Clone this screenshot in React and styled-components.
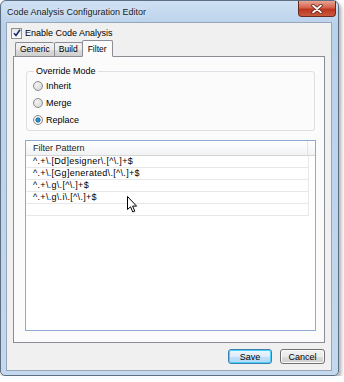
import React, { useState } from 'react';
import styled, { createGlobalStyle } from 'styled-components';

const GlobalStyle = createGlobalStyle`
  body {
    margin: 0;
    background: #ffffff;
    font-family: "Liberation Sans", Arial, sans-serif;
    font-size: 9px;
    color: #000;
  }
`;

const patterns = [
  '^.+\\.[Dd]esigner\\.[^\\.]+$',
  '^.+\\.[Gg]enerated\\.[^\\.]+$',
  '^.+\\.g\\.[^\\.]+$',
  '^.+\\.g\\.i\\.[^\\.]+$',
  '',
];

function App() {
  const [enabled, setEnabled] = useState(true);
  const [mode, setMode] = useState('Replace');
  const [tab, setTab] = useState('Filter');

  return (
    <>
      <GlobalStyle />
      <Window>
        <TitleBar>
          <Title>Code Analysis Configuration Editor</Title>
          <CloseButton aria-label="Close">
            <svg width="12" height="10" viewBox="0 0 12 10">
              <path d="M2 1.5 L10 8.5 M10 1.5 L2 8.5" stroke="#5b1d14" strokeWidth="3.4" strokeLinecap="round" />
              <path d="M2 1.5 L10 8.5 M10 1.5 L2 8.5" stroke="#ffffff" strokeWidth="1.8" strokeLinecap="round" />
            </svg>
          </CloseButton>
        </TitleBar>

        <Client>
          <CheckRow onClick={() => setEnabled(!enabled)}>
            <CheckBox>
              {enabled && (
                <svg width="8" height="8" viewBox="0 0 8 8">
                  <path d="M1 4.2 L3 6.5 L7 0.8" fill="none" stroke="#1c2d6e" strokeWidth="1.6" />
                </svg>
              )}
            </CheckBox>
            Enable Code Analysis
          </CheckRow>

          <TabStrip>
            {['Generic', 'Build', 'Filter'].map((t) => (
              <Tab key={t} $active={tab === t} onClick={() => setTab(t)}>{t}</Tab>
            ))}
          </TabStrip>

          <Panel>
            <GroupBox>
              <Legend>Override Mode</Legend>
              {['Inherit', 'Merge', 'Replace'].map((m) => (
                <RadioRow key={m} onClick={() => setMode(m)}>
                  <Radio $checked={mode === m} />
                  {m}
                </RadioRow>
              ))}
            </GroupBox>

            <ListBox>
              <ListHeader>
                <HeaderCell>Filter Pattern</HeaderCell>
              </ListHeader>
              {patterns.map((p, i) => (
                <ListRow key={i}>
                  <RowCell>{p}</RowCell>
                </ListRow>
              ))}
              <Cursor width="11" height="17" viewBox="0 0 11 17">
                <path d="M0.5 0.5 L0.5 13.5 L3.5 10.8 L5.8 16 L7.8 15.1 L5.6 10.1 L9.6 10.1 Z" fill="#ffffff" stroke="#000000" strokeWidth="1" />
              </Cursor>
            </ListBox>
          </Panel>

          <ButtonRow>
            <Button $default>Save</Button>
            <Button>Cancel</Button>
          </ButtonRow>
        </Client>
      </Window>
    </>
  );
}

const Window = styled.div`
  width: 339px;
  height: 376px;
  border: 1px solid #5d6e82;
  border-radius: 6px 6px 5px 5px;
  background: linear-gradient(180deg, #cfe1f3 0px, #b9d1eb 24px, #c4d8ee 100%);
  box-shadow: 2px 3px 4px rgba(0, 0, 0, 0.35);
  padding: 0 6px 4px 5px;
  box-sizing: border-box;
  display: flex;
  flex-direction: column;
`;

const TitleBar = styled.div`
  height: 21px;
  display: flex;
  align-items: flex-start;
`;

const Title = styled.div`
  padding: 6px 0 0 1px;
  font-size: 9px;
  color: #1a1a1a;
  text-shadow: 0 0 6px #ffffff;
`;

const CloseButton = styled.div`
  margin-left: auto;
  margin-right: -4px;
  width: 38px;
  height: 16px;
  box-sizing: border-box;
  border: 1px solid #6b2a20;
  border-top: none;
  border-radius: 0 0 4px 4px;
  background: linear-gradient(180deg, #e9a595 0%, #d4624b 45%, #bb3520 55%, #cc5a3c 100%);
  display: flex;
  align-items: center;
  justify-content: center;
`;

const Client = styled.div`
  flex: 1;
  background: #f0f0f0;
  border: 1px solid #97a7b9;
  display: flex;
  flex-direction: column;
  padding: 0 6px 0 6px;
`;

const CheckRow = styled.div`
  display: flex;
  align-items: center;
  gap: 3px;
  margin: 4px 0 0 -2px;
  height: 12px;
  cursor: default;
`;

const CheckBox = styled.div`
  width: 9px;
  height: 9px;
  border: 1px solid #8f8f8f;
  background: linear-gradient(180deg, #e6e6e6, #ffffff);
  display: flex;
  align-items: center;
  justify-content: center;
`;

const TabStrip = styled.div`
  display: flex;
  align-items: flex-end;
  height: 17px;
  margin-top: 1px;
  padding-left: 2px;
  position: relative;
  z-index: 1;
`;

const Tab = styled.div`
  height: ${(p) => (p.$active ? '17px' : '14px')};
  padding: ${(p) => (p.$active ? '3px 5px 0 5px' : '1px 4px 0 4px')};
  margin: ${(p) => (p.$active ? '0 -2px 0 -1px' : '0 0 1px 0')};
  box-sizing: border-box;
  font-size: 8.5px;
  border: 1px solid #8a8d94;
  border-bottom: ${(p) => (p.$active ? '1px solid #fbfbfb' : 'none')};
  border-right: ${(p) => (p.$active ? '1px solid #8a8d94' : 'none')};
  background: ${(p) => (p.$active ? '#fbfbfb' : 'linear-gradient(180deg, #f2f2f2 0%, #ebebeb 50%, #dcdcdc 51%, #cfcfcf 100%)')};
  border-radius: 2px 2px 0 0;
  cursor: default;

  &:nth-child(2) {
    border-right: 1px solid #8a8d94;
  }
`;

const Panel = styled.div`
  height: 287px;
  box-sizing: border-box;
  margin-top: -1px;
  border: 1px solid #8a8d94;
  background: #fbfbfb;
  padding: 8px 11px 0 11px;
  display: flex;
  flex-direction: column;
`;

const GroupBox = styled.fieldset`
  margin: 0 0 0 1px;
  width: 289px;
  box-sizing: border-box;
  height: 66px;
  padding: 0 0 0 6px;
  border: 1px solid #dcdfe4;
  border-radius: 3px;
`;

const Legend = styled.legend`
  padding: 0 2px;
  margin-left: 1px;
  line-height: 12px;
  font-size: 9px;
`;

const RadioRow = styled.div`
  display: flex;
  align-items: center;
  gap: 3px;
  height: 17px;
  cursor: default;
`;

const Radio = styled.div`
  width: 10px;
  height: 10px;
  box-sizing: border-box;
  border-radius: 50%;
  border: 1px solid #8c8c8c;
  background: ${(p) =>
    p.$checked
      ? 'radial-gradient(circle, #3ea6d8 0, #1c6ea8 2.2px, #e8e8e8 2.8px, #f7f7f7 100%)'
      : 'radial-gradient(circle at 35% 35%, #f4f4f4 0, #dcdcdc 70%, #c9c9c9 100%)'};
`;

const ListBox = styled.div`
  position: relative;
  margin-top: 9px;
  width: 291px;
  height: 191px;
  box-sizing: border-box;
  border: 1px solid #8faad0;
  background: #ffffff;
`;

const ListHeader = styled.div`
  height: 15px;
  box-sizing: border-box;
  border-bottom: 1px solid #d5d5d5;
  background: linear-gradient(180deg, #ffffff 0%, #f7f8fa 60%, #f1f2f4 100%);
  display: flex;
`;

const HeaderCell = styled.div`
  width: 282px;
  box-sizing: border-box;
  padding: 2px 0 0 7px;
  border-right: 1px solid #e3e4e6;
  color: #1e1e1e;
`;

const ListRow = styled.div`
  height: 12px;
  box-sizing: border-box;
  border-bottom: 1px solid #e8e8e8;
  width: 283px;
  border-right: 1px solid #e8e8e8;
`;

const RowCell = styled.div`
  padding: 0 0 0 7px;
  line-height: 11px;
  letter-spacing: 0.3px;
  white-space: pre;
`;

const Cursor = styled.svg`
  position: absolute;
  left: 101px;
  top: 55px;
`;

const ButtonRow = styled.div`
  display: flex;
  justify-content: flex-end;
  gap: 8px;
  margin-top: 6px;
`;

const Button = styled.div`
  width: ${(p) => (p.$default ? '44px' : '45px')};
  height: 15px;
  box-sizing: border-box;
  border-radius: 3px;
  border: 1px solid ${(p) => (p.$default ? '#3c7fb1' : '#707070')};
  box-shadow: inset 0 0 0 1px ${(p) => (p.$default ? '#48d0f8' : '#fbfbfb')};
  background: ${(p) =>
    p.$default
      ? 'linear-gradient(180deg, #ecf6fc 0%, #dcecfc 50%, #c0e0f8 51%, #b0d8f6 100%)'
      : 'linear-gradient(180deg, #f2f2f2 0%, #ebebeb 50%, #dddddd 51%, #cfcfcf 100%)'};
  display: flex;
  align-items: center;
  justify-content: center;
  font-size: 9px;
  cursor: default;
`;

export default App;
